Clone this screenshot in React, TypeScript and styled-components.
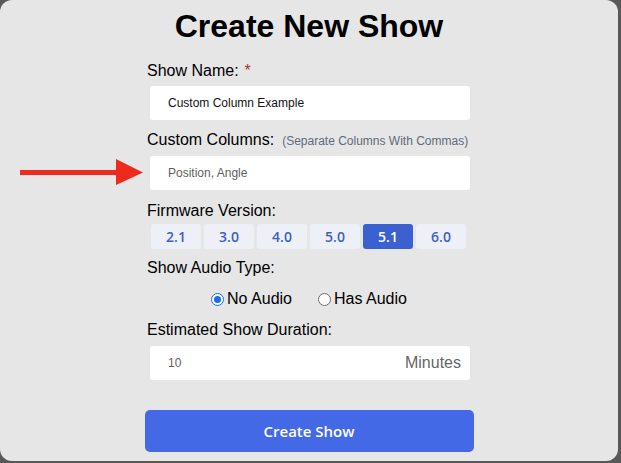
import React, { useState } from "react";
import styled, { createGlobalStyle } from "styled-components";

const GlobalStyle = createGlobalStyle`
  html, body {
    margin: 0;
    padding: 0;
    background: #585858;
  }
  * {
    box-sizing: border-box;
  }
`;

const firmwareVersions = ["2.1", "3.0", "4.0", "5.0", "5.1", "6.0"];

const Card = styled.div`
  position: relative;
  width: 618px;
  height: 461px;
  background: #e6e6e6;
  border-radius: 12px;
  overflow: hidden;
  font-family: "Liberation Sans", Arial, sans-serif;
  color: #000;
`;

const Form = styled.div`
  width: 324px;
  margin: 0 auto;
  display: flex;
  flex-direction: column;
`;

const Title = styled.h1`
  margin: 8px 0 0;
  font-size: 32px;
  line-height: 37px;
  font-weight: 700;
  text-align: center;
  white-space: nowrap;
  width: 618px;
  align-self: center;
`;

const Label = styled.div<{ $top: number }>`
  margin-top: ${(p) => p.$top}px;
  font-size: 16px;
  line-height: 18px;
  white-space: nowrap;
`;

const Required = styled.span`
  color: #a8322c;
  margin-left: 6px;
`;

const Hint = styled.span`
  font-size: 12px;
  color: #5e6b7c;
  margin-left: 8px;
`;

const InputBox = styled.div<{ $top: number }>`
  margin: ${(p) => p.$top}px 0 0 3px;
  width: 320px;
  height: 34px;
  background: #fff;
  border-radius: 3px;
  display: flex;
  align-items: center;
  justify-content: space-between;
  padding: 0 9px 0 18px;
`;

const InputText = styled.span<{ $muted?: boolean }>`
  font-size: 12px;
  color: ${(p) => (p.$muted ? "#5f5f5f" : "#111")};
`;

const Unit = styled.span`
  font-size: 16px;
  color: #666;
`;

const VersionRow = styled.div`
  margin: 4px 0 0 4px;
  display: flex;
  gap: 3px;
`;

const VersionButton = styled.button<{ $active: boolean }>`
  width: 50px;
  height: 25px;
  border: none;
  border-radius: 3px;
  padding: 0;
  font-family: "Open Sans", sans-serif;
  font-weight: 600;
  font-size: 14px;
  color: ${(p) => (p.$active ? "#fff" : "#3d5fc4")};
  background: ${(p) => (p.$active ? "#3b61d0" : "#eef0f7")};
  cursor: pointer;
`;

const RadioRow = styled.div`
  margin-top: 13px;
  display: flex;
  justify-content: center;
  gap: 26px;
  font-size: 16px;
  line-height: 18px;
`;

const RadioOption = styled.label`
  display: flex;
  align-items: center;
  gap: 3px;
  cursor: pointer;
`;

const RadioDot = styled.span<{ $checked: boolean }>`
  width: 13px;
  height: 13px;
  border-radius: 50%;
  background: #fff;
  border: ${(p) => (p.$checked ? "1.5px solid #1a6fe0" : "1px solid #6b6b6b")};
  display: flex;
  align-items: center;
  justify-content: center;
  &::after {
    content: "";
    display: ${(p) => (p.$checked ? "block" : "none")};
    width: 7px;
    height: 7px;
    border-radius: 50%;
    background: #1a6fe0;
  }
`;

const SubmitButton = styled.button`
  margin-top: 30px;
  align-self: center;
  width: 329px;
  height: 42px;
  border: none;
  border-radius: 5px;
  background: #4469e6;
  color: #fff;
  font-family: "Open Sans", sans-serif;
  font-weight: 600;
  font-size: 15px;
  cursor: pointer;
`;

const Pointer = styled.svg`
  position: absolute;
  left: 18px;
  top: 156px;
`;

const App = () => {
  const [version, setVersion] = useState("5.1");
  const [hasAudio, setHasAudio] = useState(false);

  return (
    <Card>
      <GlobalStyle />
      <Form>
        <Title>Create New Show</Title>

        <Label $top={17}>
          Show Name:<Required>*</Required>
        </Label>
        <InputBox $top={6}>
          <InputText>Custom Column Example</InputText>
        </InputBox>

        <Label $top={11}>
          Custom Columns:<Hint>(Separate Columns With Commas)</Hint>
        </Label>
        <InputBox $top={6}>
          <InputText $muted>Position, Angle</InputText>
        </InputBox>

        <Label $top={12}>Firmware Version:</Label>
        <VersionRow>
          {firmwareVersions.map((v) => (
            <VersionButton key={v} $active={v === version} onClick={() => setVersion(v)}>
              {v}
            </VersionButton>
          ))}
        </VersionRow>

        <Label $top={10}>Show Audio Type:</Label>
        <RadioRow>
          <RadioOption onClick={() => setHasAudio(false)}>
            <RadioDot $checked={!hasAudio} />
            No Audio
          </RadioOption>
          <RadioOption onClick={() => setHasAudio(true)}>
            <RadioDot $checked={hasAudio} />
            Has Audio
          </RadioOption>
        </RadioRow>

        <Label $top={13}>Estimated Show Duration:</Label>
        <InputBox $top={7}>
          <InputText $muted>10</InputText>
          <Unit>Minutes</Unit>
        </InputBox>

        <SubmitButton>Create Show</SubmitButton>
      </Form>

      {/* annotation arrow */}
      <Pointer width="130" height="32" viewBox="0 0 130 32">
        <rect x="2" y="14" width="100" height="5" fill="#ee2a1e" />
        <polygon points="98,3 125,16.5 98,29" fill="#ee2a1e" />
      </Pointer>
    </Card>
  );
};

export default App;
